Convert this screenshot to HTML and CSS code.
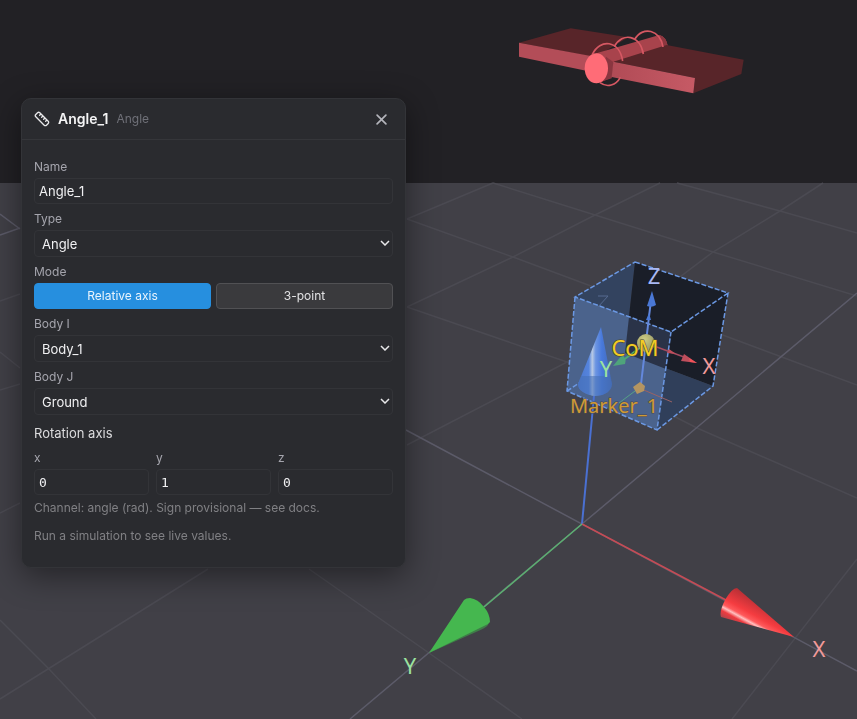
FILE: index.html
```html
<!DOCTYPE html>
<html lang="en">
<head>
<meta charset="utf-8">
<meta name="viewport" content="width=device-width, initial-scale=1">
<title>Angle_1</title>
<link rel="stylesheet" href="styles.css">
</head>
<body>
<svg class="scene" viewBox="0 0 857 719" preserveAspectRatio="xMidYMid slice" role="img" aria-label="3D viewport">
  <defs>
    <linearGradient id="coneRed" gradientUnits="userSpaceOnUse" x1="736" y1="588" x2="720" y2="617">
      <stop offset="0" stop-color="#b92f35"/><stop offset=".45" stop-color="#f53c40"/><stop offset=".62" stop-color="#ff5a5c"/><stop offset=".7" stop-color="#ffc0c0"/><stop offset=".8" stop-color="#ee3b40"/><stop offset="1" stop-color="#a8454d"/>
    </linearGradient>
    <linearGradient id="coneBlue" x1="0" x2="1" y1="0" y2="0">
      <stop offset="0" stop-color="#4c78d0"/><stop offset=".32" stop-color="#5584dd"/><stop offset=".42" stop-color="#b8c9e4"/><stop offset=".52" stop-color="#6c95e2"/><stop offset=".7" stop-color="#4879dc"/><stop offset="1" stop-color="#4469b4"/>
    </linearGradient>
    <linearGradient id="plate" x1="0" x2="1"><stop offset="0" stop-color="#b14b56"/><stop offset="1" stop-color="#c65a65"/></linearGradient>
    <radialGradient id="ball" cx=".4" cy=".3"><stop offset="0" stop-color="#cfcd82"/><stop offset="1" stop-color="#a5a66f"/></radialGradient>
  </defs>

  <rect width="857" height="183" fill="#222125"/>
  <rect y="183" width="857" height="536" fill="#414047"/>

  <g class="grid">
    <path d="M407 219 493 183M407 307 513 257 595 215 660 183M407 445 567 362 713 252 780 211 823 183M732 719 857 559M0 699 208 569"/>
    <path d="M493 183 595 215 713 252 857 296M677 183 780 211 857 233M407 219 513 257 857 385M407 307 567 362 697 428 857 498M0 620 49 669 96 719M309 569 429 653 522 719"/>
    <path d="M0 301 20 294M0 352 20 368M0 390 20 384M0 513 20 503"/>
  </g>
  <path class="grid-main" d="M406 430 857 671M350 719 582 524 857 293M0 214 20 229M0 235 20 228"/>

  <g transform="translate(500 10) scale(.33333)">
    <path fill="#582529" d="M57 98 212 55 385 82 285 142Z"/>
    <path fill="#b34d58" d="M57 98 285 140 262 183 57 140Z"/>
    <path fill="#8f3a42" d="M289 130 340 155 335 205 289 220Z"/>
    <path fill="#a8434c" d="M289 130 478 75Q498 80 503 107L335 160 300 215Z"/>
    <path fill="#8d363f" d="M478 75Q498 80 503 107L491 110Q486 88 467 78Z"/>
    <path fill="#582529" d="M340 155 500 105 731 149 724 192 580 250 585 204Z"/>
    <path fill="#8a3640" d="M318 140 340 156 337 201 300 218Z"/>
    <path fill="url(#plate)" d="M340 155 585 204 580 250 335 201Z"/>
    <ellipse cx="289" cy="175" rx="35" ry="45" fill="#ff6c77"/>
    <g fill="none" stroke="#d65863" stroke-width="5">
      <path d="M277 133C300 85 358 90 368 153"/>
      <path d="M343 110C367 65 421 75 430 132"/>
      <path d="M403 90C428 45 482 60 489 111"/>
      <path d="M300 218C322 234 348 226 361 202"/>
    </g>
  </g>

  <g>
    <path fill="#33435f" d="M635 262 575 297 567 391 625 353Z"/>
    <path fill="#1a1e28" d="M635 262 728 293 713 386 625 353Z"/>
    <path fill="#303f5a" d="M625 353 713 386 657 430 567 391Z"/>
    <path fill="#4b638c" d="M575 297 671 332 657 430 567 391Z"/>
    <path fill="#2a3348" d="M629 317 671 332 666 369 625 353Z"/>
    <path class="faint-z" d="M598 296H608L598 307"/>
    <path class="edge" d="M635 262 728 293 671 332 575 297ZM575 297 567 391 657 430 671 332M657 430 713 386 728 293M567 391 584 380"/>
  </g>

  <path class="axis-blue" d="M594 396 582 524"/>
  <path fill="url(#coneBlue)" d="M601 327 612 384Q611 395 595 396 578 393 578 384Z"/>
  <path fill="#4670b5" opacity=".55" d="M590 376H610L612 384Q611 395 595 396 578 393 578 384L581 376Z"/>

  <g fill="none" stroke-width="1">
    <path stroke="#6488dc" stroke-width="2" d="M641 384 651 300"/>
    <path stroke="#56a286" d="M639 388 619 403"/>
    <path stroke="#9a6265" d="M639 388 672 402"/>
    <path stroke="#a54c61" stroke-width="1.5" d="M654 346 684 357"/>
    <path stroke="#4eaa72" stroke-width="2" d="M641 347 622 361"/>
  </g>
  <path fill="#4a78d5" d="M652 291 656 305Q652 308 647 306ZM649 313 651 320H646Z"/>
  <path fill="#bf4e5c" d="M697 363 681 361 684 354ZM676 354 667 353 669 349Z"/>
  <path fill="#f35359" d="M697 363 689 358 690 362Z"/>
  <path fill="#4fa47b" d="M613 366 622 355Q627 358 625 364Z"/>
  <circle cx="646" cy="343" r="9" fill="url(#ball)"/>
  <path fill="#b59561" d="M640 382 645 386 644 391 637 394 633 387Z"/>

  <path stroke="#c64b55" stroke-width="1.5" d="M582 524 726 600"/>
  <path stroke="#5cb071" stroke-width="1.5" d="M582 524 484 607"/>
  <path fill="#3f7d48" d="M429 653 489 621 488 625Q486 628 476 632Z"/>
  <path fill="#45b74f" d="M429 653 464 600Q466 598 470 598 478 599 484 607 490 614 490 622L488 624Z"/>
  <path fill="url(#coneRed)" d="M794 637 737 588Q732 588 725 600 719 612 721 617Z"/>

  <g class="labels">
    <text class="z" x="654" y="284">Z</text>
    <text class="x" x="709" y="374">X</text>
    <text class="com" x="635" y="356">CoM</text>
    <text class="y" x="606" y="377">Y</text>
    <text class="marker" x="614" y="413">Marker_1</text>
    <text class="y" x="410" y="674">Y</text>
    <text class="x" x="819" y="657">X</text>
  </g>
</svg>

<main class="workspace">
  <form class="panel" onsubmit="return false">
    <header class="panel-header">
      <svg class="ruler" viewBox="0 0 24 24" aria-hidden="true"><path d="M21.3 15.3a2.4 2.4 0 0 1 0 3.4l-2.6 2.6a2.4 2.4 0 0 1-3.4 0L2.7 8.7a2.41 2.41 0 0 1 0-3.4l2.6-2.6a2.41 2.41 0 0 1 3.4 0ZM14.5 12.5l2-2M11.5 9.5l2-2M8.5 6.5l2-2M17.5 15.5l2-2"/></svg>
      <h1 class="title">Angle_1</h1>
      <span class="kind">Angle</span>
      <button class="close" type="button" aria-label="Close"><svg viewBox="0 0 10 10" aria-hidden="true"><path d="M1 1 9 9M9 1 1 9"/></svg></button>
    </header>
    <div class="panel-body">
      <div class="field">
        <label for="name">Name</label>
        <input id="name" class="control" type="text" value="Angle_1">
      </div>
      <div class="field">
        <label for="type">Type</label>
        <div class="select-wrap">
          <select id="type" class="control"><option>Angle</option></select>
          <svg class="chevron" viewBox="0 0 10 6" aria-hidden="true"><path d="M1 1 5 5 9 1"/></svg>
        </div>
      </div>
      <div class="field" role="group" aria-labelledby="mode">
        <span id="mode" class="label">Mode</span>
        <div class="modes">
          <button class="mode active" type="button" aria-pressed="true">Relative axis</button>
          <button class="mode" type="button" aria-pressed="false">3-point</button>
        </div>
      </div>
      <div class="field">
        <label for="body-i">Body I</label>
        <div class="select-wrap">
          <select id="body-i" class="control"><option>Body_1</option></select>
          <svg class="chevron" viewBox="0 0 10 6" aria-hidden="true"><path d="M1 1 5 5 9 1"/></svg>
        </div>
      </div>
      <div class="field">
        <label for="body-j">Body J</label>
        <div class="select-wrap">
          <select id="body-j" class="control"><option>Ground</option></select>
          <svg class="chevron" viewBox="0 0 10 6" aria-hidden="true"><path d="M1 1 5 5 9 1"/></svg>
        </div>
      </div>
      <h2 class="subtitle">Rotation axis</h2>
      <div class="axes">
        <div class="field"><label for="ax">x</label><input id="ax" class="control mono" type="text" inputmode="decimal" value="0"></div>
        <div class="field"><label for="ay">y</label><input id="ay" class="control mono" type="text" inputmode="decimal" value="1"></div>
        <div class="field"><label for="az">z</label><input id="az" class="control mono" type="text" inputmode="decimal" value="0"></div>
      </div>
      <div class="hints">
        <p>Channel: angle (rad). Sign provisional — see docs.</p>
        <p>Run a simulation to see live values.</p>
      </div>
    </div>
  </form>
</main>
</body>
</html>
```
FILE: styles.css
```css
* { box-sizing: border-box; }

body {
  margin: 0;
  min-height: 100vh;
  background: #414047;
  color: #e8e8ea;
  font: 13px/18px Inter, sans-serif;
}

h1, h2, p { margin: 0; }

.scene {
  position: fixed;
  inset: 0;
  width: 100%;
  height: 100%;
}

.grid path { fill: none; stroke: #4b4a52; stroke-width: 1.5; }
.grid-main { fill: none; stroke: #5c5b69; stroke-width: 1.5; }
.edge { fill: none; stroke: #6b98e3; stroke-width: 1.5; stroke-dasharray: 5 2; }
.faint-z { fill: none; stroke: #566b91; stroke-width: 1; }
.axis-blue { stroke: #4a70d2; stroke-width: 2; }

.labels {
  font: 22px "Noto Sans", sans-serif;
  text-anchor: middle;
}
.labels .x { fill: #f09a9a; }
.labels .y { fill: #9be29f; }
.labels .z { fill: #a9b9f5; }
.labels .com { fill: #f2cc25; stroke: #4a4526; stroke-width: 1; paint-order: stroke; }
.labels .marker { fill: #cf9a35; font-size: 20px; stroke: #4c4a50; stroke-width: 1; paint-order: stroke; }

.workspace {
  position: relative;
  padding: 98px 21px 21px;
}

.panel {
  width: 100%;
  max-width: 385px;
  background: #2a2b2f;
  border: 1px solid #333438;
  border-radius: 10px;
  box-shadow: 0 8px 32px rgba(0, 0, 0, .45);
}

.panel-header {
  display: flex;
  align-items: center;
  gap: 8px;
  height: 41px;
  padding: 0 12px;
  border-bottom: 1px solid #35363a;
}
.ruler {
  width: 16px;
  height: 16px;
  fill: none;
  stroke: #e8e8ea;
  stroke-width: 2;
  stroke-linecap: round;
  stroke-linejoin: round;
}
.title { font-size: 14px; font-weight: 600; color: #f4f4f5; }
.kind { font-size: 12px; color: #6f7078; }
.close {
  display: grid;
  place-items: center;
  width: 24px;
  height: 24px;
  margin-left: auto;
  padding: 0;
  border: 0;
  background: none;
}
.close svg { width: 11px; height: 11px; stroke: #b4b5bc; stroke-width: 1.5; stroke-linecap: round; }

.panel-body {
  display: flex;
  flex-direction: column;
  gap: 8px;
  padding: 20px 12px 22px;
}

.field { display: flex; flex-direction: column; gap: 4px; min-width: 0; }
label, .label { font-size: 12px; line-height: 14px; color: #a5a5ad; }

.control {
  display: block;
  width: 100%;
  height: 26px;
  padding: 0 4px;
  border: 1px solid #333438;
  border-radius: 4px;
  background: #2a2b2f;
  color: #f0f0f2;
  font: inherit;
}
select.control { height: 27px; padding: 0 24px 0 7px; appearance: none; }
.mono { font-family: "DejaVu Sans Mono", monospace; font-size: 13px; }

.select-wrap { position: relative; }
.chevron {
  position: absolute;
  top: 10px;
  right: 3px;
  width: 10px;
  height: 6px;
  fill: none;
  stroke: #e8e8ea;
  stroke-width: 1.5;
  pointer-events: none;
}

.modes { display: grid; grid-template-columns: 1fr 1fr; gap: 5px; }
.mode {
  height: 26px;
  padding: 0;
  border: 1px solid #515154;
  border-radius: 4px;
  background: #3a3a3d;
  color: #e2e2e4;
  font: 12px/18px Inter, sans-serif;
}
.mode.active { border-color: #268fdf; background: #268fdf; color: #e9f4fd; }

.subtitle { font-size: 13px; font-weight: 400; line-height: 20px; color: #dcdcde; }
.axes { display: grid; grid-template-columns: repeat(3, 1fr); gap: 7px; }

.hints {
  display: flex;
  flex-direction: column;
  gap: 10px;
  margin-top: -4px;
  font-size: 12px;
  font-variation-settings: "opsz" 20;
  color: #808084;
}
```
